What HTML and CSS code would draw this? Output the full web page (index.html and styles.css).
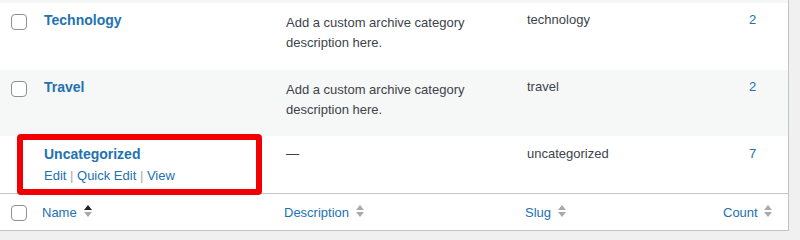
FILE: index.html
```html
<!DOCTYPE html>
<html lang="en">
<head>
<meta charset="utf-8">
<title>Categories</title>
<link rel="stylesheet" href="styles.css">
</head>
<body>
<div class="page">
  <div class="list">
    <div class="prev-row"></div>
    <table class="terms">
      <colgroup>
        <col class="c-check">
        <col class="c-name">
        <col class="c-desc">
        <col class="c-slug">
        <col class="c-count">
      </colgroup>
      <tbody>
        <tr class="row row-tech">
          <td class="check"><input type="checkbox" class="cb"></td>
          <td class="name"><a class="row-title" href="#">Technology</a></td>
          <td class="desc">Add a custom archive category description here.</td>
          <td class="slug">technology</td>
          <td class="count"><a href="#">2</a></td>
        </tr>
        <tr class="row row-travel alt">
          <td class="check"><input type="checkbox" class="cb"></td>
          <td class="name"><a class="row-title" href="#">Travel</a></td>
          <td class="desc">Add a custom archive category description here.</td>
          <td class="slug">travel</td>
          <td class="count"><a href="#">2</a></td>
        </tr>
        <tr class="row row-uncat">
          <td class="check"></td>
          <td class="name">
            <a class="row-title" href="#">Uncategorized</a>
            <div class="row-actions"><a href="#">Edit</a> | <a href="#">Quick Edit</a> | <a href="#">View</a></div>
          </td>
          <td class="desc dash">—</td>
          <td class="slug">uncategorized</td>
          <td class="count"><a href="#">7</a></td>
        </tr>
      </tbody>
      <tfoot>
        <tr class="foot">
          <th class="check"><input type="checkbox" class="cb"></th>
          <th class="sortable"><a href="#"><span>Name</span><svg class="sort" width="8" height="14" viewBox="0 0 8 14"><polygon class="up active" points="0,6 4,1 8,6"/><polygon class="down" points="0,8 8,8 4,13"/></svg></a></th>
          <th class="sortable"><a href="#"><span>Description</span><svg class="sort" width="8" height="14" viewBox="0 0 8 14"><polygon class="up" points="0,6 4,1 8,6"/><polygon class="down" points="0,8 8,8 4,13"/></svg></a></th>
          <th class="sortable"><a href="#"><span>Slug</span><svg class="sort" width="8" height="14" viewBox="0 0 8 14"><polygon class="up" points="0,6 4,1 8,6"/><polygon class="down" points="0,8 8,8 4,13"/></svg></a></th>
          <th class="sortable num"><a href="#"><span>Count</span><svg class="sort" width="8" height="14" viewBox="0 0 8 14"><polygon class="up" points="0,6 4,1 8,6"/><polygon class="down" points="0,8 8,8 4,13"/></svg></a></th>
        </tr>
      </tfoot>
    </table>
  </div>
  <div class="highlight"></div>
</div>
</body>
</html>
```
FILE: styles.css
```css
html, body {
  margin: 0;
  padding: 0;
}
body {
  background: #f0f0f1;
  font-family: "Liberation Sans", Arial, sans-serif;
  font-size: 13px;
  line-height: 1.5;
  color: #3c434a;
}
.page {
  position: relative;
  width: 800px;
  height: 239px;
  overflow: hidden;
}
.list {
  width: 788px;
  background: #fff;
  border-right: 1px solid #c3c4c7;
  border-bottom: 1px solid #c3c4c7;
}
.prev-row {
  height: 3px;
  background: #f6f7f7;
}
.terms {
  width: 788px;
  table-layout: fixed;
  border-collapse: separate;
  border-spacing: 0;
}
.c-check { width: 34px; }
.c-name { width: 242px; }
.c-desc { width: 241px; }
.c-slug { width: 200px; }
.c-count { width: 71px; }

.row td {
  vertical-align: top;
  padding: 7px 10px 0;
}
.row-tech { height: 67px; }
.row-travel { height: 66px; }
.row-uncat { height: 57px; }
.row.alt td { background: #f6f7f7; }
.row-uncat td { padding-top: 8px; }

.row td.check {
  padding: 11px 0 0 11px;
}
.cb {
  -webkit-appearance: none;
  appearance: none;
  display: block;
  width: 16px;
  height: 16px;
  margin: 0;
  border: 1px solid #8c8f94;
  border-radius: 4px;
  background: #fff;
  box-sizing: border-box;
}
a {
  color: #2271b1;
  text-decoration: none;
}
.row-title {
  font-size: 14px;
  font-weight: 700;
  line-height: 21px;
  display: block;
}
.row-actions {
  padding-top: 1px;
  color: #a7aaad;
  font-size: 13px;
}
.row td.desc {
  padding-top: 10px;
}
.row-uncat td.desc {
  padding-top: 8px;
}
.row td.count {
  text-align: center;
  padding-left: 0;
  padding-right: 0;
}

.foot th {
  border-top: 1px solid #c3c4c7;
  height: 36px;
  padding: 0;
  text-align: left;
  font-weight: 400;
  vertical-align: top;
}
.foot th.check {
  padding: 11px 0 0 11px;
  box-sizing: border-box;
}
.sortable a {
  display: flex;
  align-items: flex-start;
  gap: 7px;
  padding: 9px 8px 0;
}
.sortable.num a {
  padding: 9px 0 0 6px;
  gap: 6px;
}
.sort {
  margin-top: 1px;
  flex: none;
}
.sort polygon {
  fill: #a7aaad;
}
.sort polygon.active {
  fill: #1d2327;
}

.highlight {
  position: absolute;
  left: 17px;
  top: 134px;
  width: 245px;
  height: 61px;
  box-sizing: border-box;
  border: 6px solid #f00000;
  border-radius: 4px;
}
```
